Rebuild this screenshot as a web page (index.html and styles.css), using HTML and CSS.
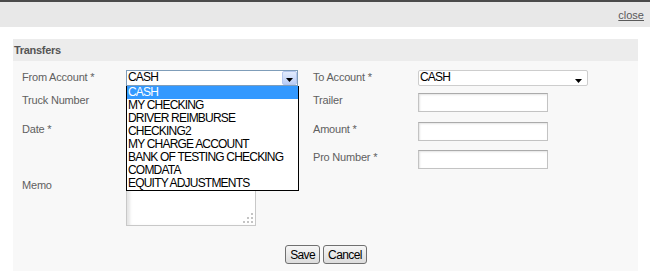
FILE: index.html
```html
<!DOCTYPE html>
<html>
<head>
  <link rel="stylesheet" href="styles.css">
</head>
<body>
  <div class="topbar"></div>
  <div class="header">
    <a href="#" class="close-link">close</a>
  </div>

  <div class="panel">
    <div class="panel-title">Transfers</div>
    <div class="panel-body">
      <div class="form-grid">
        <label class="field-label">From Account *</label>
        <div class="field">
          <div class="xp-select">
            <span class="select-text">CASH</span>
            <span class="xp-arrow">
              <svg width="7" height="4" viewBox="0 0 7 4"><polygon points="0,0 7,0 3.5,4" fill="#000"/></svg>
            </span>
            <ul class="xp-list">
              <li class="selected">CASH</li>
              <li>MY CHECKING</li>
              <li>DRIVER REIMBURSE</li>
              <li>CHECKING2</li>
              <li>MY CHARGE ACCOUNT</li>
              <li>BANK OF TESTING CHECKING</li>
              <li>COMDATA</li>
              <li>EQUITY ADJUSTMENTS</li>
            </ul>
          </div>
        </div>
        <label class="field-label">To Account *</label>
        <div class="field">
          <div class="plain-select">
            <span class="select-text">CASH</span>
            <svg class="caret" width="7" height="4" viewBox="0 0 7 4"><polygon points="0,0 7,0 3.5,4" fill="#000"/></svg>
          </div>
        </div>

        <label class="field-label">Truck Number</label>
        <div class="field"><input class="text-input" type="text"></div>
        <label class="field-label">Trailer</label>
        <div class="field"><input class="text-input" type="text"></div>

        <label class="field-label">Date *</label>
        <div class="field"><input class="text-input" type="text"></div>
        <label class="field-label">Amount *</label>
        <div class="field"><input class="text-input" type="text"></div>

        <span></span>
        <span></span>
        <label class="field-label">Pro Number *</label>
        <div class="field"><input class="text-input" type="text"></div>

        <label class="field-label">Memo</label>
        <div class="field memo-wrap">
          <textarea class="memo"></textarea>
          <svg class="grip" width="10" height="10" viewBox="0 0 10 10">
            <rect x="8" y="0" width="2" height="2" fill="#c4c4c4"/>
            <rect x="4" y="4" width="2" height="2" fill="#c4c4c4"/>
            <rect x="8" y="4" width="2" height="2" fill="#c4c4c4"/>
            <rect x="0" y="8" width="2" height="2" fill="#c4c4c4"/>
            <rect x="4" y="8" width="2" height="2" fill="#c4c4c4"/>
            <rect x="8" y="8" width="2" height="2" fill="#c4c4c4"/>
          </svg>
        </div>
      </div>

      <div class="actions">
        <button class="btn">Save</button>
        <button class="btn">Cancel</button>
      </div>
    </div>
  </div>
</body>
</html>
```

FILE: styles.css
```css
/* Base */
:root {
    --label-color: #606060;
    --font-family: 'Liberation Sans', Arial, sans-serif;
}

html, body {
    overflow: hidden;
}

body {
    margin: 0;
    background: #fff;
    font-family: var(--font-family);
}

.topbar {
    height: 2px;
    background-color: #4b4b4b;
}

.header {
    height: 25px;
    background-color: #e8e8e8;
    display: flex;
    justify-content: flex-end;
    align-items: center;
    padding-right: 6px;
}

.close-link {
    color: #5a5a5a;
    font-size: 11px;
    text-decoration: underline;
}

/* Panel */
.panel {
    margin: 12px 12px 0 13px;
}

.panel-title {
    height: 22px;
    line-height: 22px;
    background-color: #ececec;
    padding-left: 1px;
    color: #555;
    font-size: 11px;
    font-weight: bold;
    letter-spacing: -0.3px;
}

.panel-body {
    height: 210px;
    box-sizing: border-box;
    background-color: #f8f8f8;
    padding: 9px 0 0 9px;
}

.form-grid {
    display: grid;
    grid-template-columns: 104px 187px 105px 1fr;
    grid-template-rows: 14px 20px 19px 19px 48px;
    row-gap: 9px;
}

.field-label {
    color: var(--label-color);
    font-size: 11px;
    line-height: 14px;
    letter-spacing: -0.2px;
}

.field {
    position: relative;
}

/* Selects */
.select-text {
    display: block;
    font-size: 12px;
    letter-spacing: -0.8px;
    color: #000;
    line-height: 13px;
    height: 13px;
}

.xp-select {
    position: relative;
    width: 172px;
    height: 16px;
    box-sizing: border-box;
    border: 1px solid #7f9db9;
    background: #fff;
    padding-left: 1px;
}

.xp-arrow {
    position: absolute;
    top: 0;
    right: 0;
    width: 15px;
    height: 14px;
    box-sizing: border-box;
    border: 1px solid #b4c7ef;
    border-radius: 2px;
    background: linear-gradient(#e3ecfd, #b9cdf6);
    display: flex;
    justify-content: center;
    align-items: flex-end;
    padding-bottom: 2px;
}

.xp-list {
    position: absolute;
    top: 15px;
    left: -1px;
    width: 173px;
    box-sizing: border-box;
    margin: 0;
    padding: 0;
    list-style: none;
    background: #fff;
    border: 1px solid #000;
    border-top: none;
    z-index: 10;
}

.xp-list li {
    height: 13px;
    line-height: 13px;
    padding-left: 1px;
    font-size: 12px;
    letter-spacing: -0.8px;
    color: #000;
}

.xp-list li.selected {
    background-color: #3399ff;
    color: #fff;
}

.plain-select {
    position: relative;
    width: 170px;
    height: 16px;
    box-sizing: border-box;
    border: 1px solid #cdcdcd;
    border-radius: 2px;
    background: #fff;
    padding-left: 1px;
}

.plain-select .caret {
    position: absolute;
    right: 5px;
    top: 8px;
}

/* Inputs */
.text-input {
    display: block;
    width: 130px;
    height: 19px;
    box-sizing: border-box;
    margin: 0;
    padding: 0 2px;
    border: 1px solid #c3c3c3;
    border-top-color: #ababab;
    box-shadow: inset 1px 1px 2px #e4e4e4;
    background: #fff;
}

.memo-wrap {
    width: 130px;
}

.memo {
    display: block;
    width: 130px;
    height: 48px;
    box-sizing: border-box;
    margin: 0;
    border: 1px solid #c8c8c8;
    box-shadow: inset 3px 1px 3px #e6e6e6;
    background: #fff;
    resize: none;
}

.grip {
    position: absolute;
    right: 3px;
    bottom: 3px;
}

/* Buttons */
.actions {
    display: flex;
    justify-content: center;
    gap: 3px;
    margin-top: 19px;
    padding-right: 8px;
}

.btn {
    height: 19px;
    padding: 0 4px;
    margin: 0;
    border: 1px solid #707070;
    border-radius: 3px;
    background: linear-gradient(#f6f6f6, #dcdcdc);
    font-family: var(--font-family);
    font-size: 12px;
    letter-spacing: -0.6px;
    color: #000;
}
```
